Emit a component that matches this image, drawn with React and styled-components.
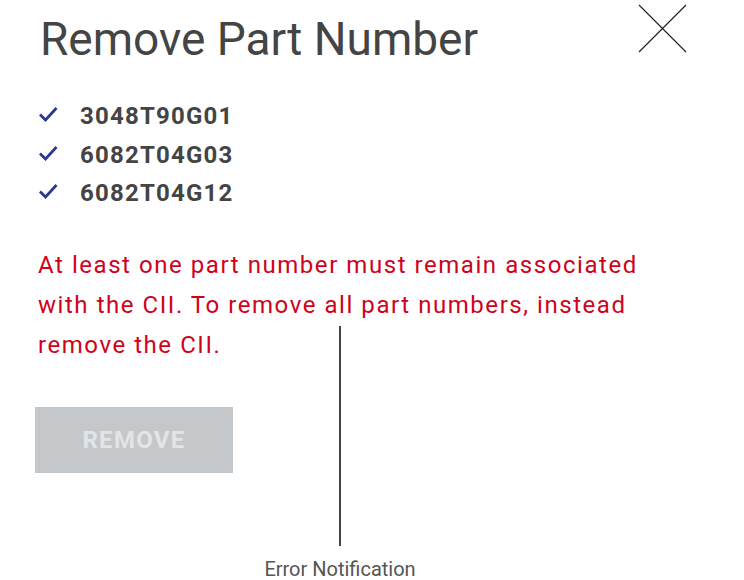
import React from 'react'
import styled, { createGlobalStyle } from 'styled-components';

const GlobalStyle = createGlobalStyle`
    html, body {
        margin: 0;
        padding: 0;
        background: #ffffff;
    }
    body {
        font-family: Roboto, "Liberation Sans", sans-serif;
    }
`;

const parts = ['3048T90G01', '6082T04G03', '6082T04G12'];

const App = () => {
    return (
        <Page>
            <GlobalStyle />
            <Header>
                <Title>Remove Part Number</Title>
                <CloseButton aria-label="Close">
                    <svg width="50" height="50" viewBox="0 0 50 50">
                        <path d="M1 1 L48 48 M48 1 L1 48" stroke="#222" strokeWidth="1.2" fill="none" />
                    </svg>
                </CloseButton>
            </Header>

            <PartList>
                {parts.map((p) => (
                    <PartRow key={p}>
                        <Check viewBox="0 0 20 16">
                            <path d="M2 8.5 L7.5 14 L18.5 2" stroke="#2b3990" strokeWidth="2.8" fill="none" />
                        </Check>
                        <PartNumber>{p}</PartNumber>
                    </PartRow>
                ))}
            </PartList>

            <ErrorText>
                At least one part number must remain associated with the CII. To remove all part numbers, instead remove the CII.
            </ErrorText>

            <RemoveButton disabled>REMOVE</RemoveButton>

            <Callout>
                <CalloutLine />
                <CalloutLabel>Error Notification</CalloutLabel>
            </Callout>
        </Page>
    )
}

const Page = styled.div`
    position: relative;
    width: 744px;
    height: 580px;
    padding: 0 0 0 38px;
    box-sizing: border-box;
    overflow: hidden;
`;

const Header = styled.div`
    display: flex;
    justify-content: space-between;
    align-items: flex-start;
    width: 650px;
    padding-top: 12px;
`;

const Title = styled.h1`
    margin: 0 0 0 2px;
    font-size: 46px;
    line-height: 54px;
    font-weight: 400;
    color: #444444;
`;

const CloseButton = styled.div`
    margin-top: -8px;
    display: flex;
    cursor: pointer;
`;

const PartList = styled.ul`
    list-style: none;
    margin: 31px 0 0 0;
    padding: 0;
    display: flex;
    flex-direction: column;
`;

const PartRow = styled.li`
    display: flex;
    align-items: center;
    height: 38.5px;
`;

const Check = styled.svg`
    width: 20px;
    height: 16px;
    margin-top: -4px;
    margin-right: 22px;
`;

const PartNumber = styled.span`
    font-size: 24px;
    line-height: 28px;
    font-weight: 700;
    letter-spacing: 1.2px;
    color: #444444;
`;

const ErrorText = styled.p`
    margin: 32px 0 0 0;
    width: 650px;
    font-size: 24px;
    line-height: 40px;
    letter-spacing: 1.55px;
    color: #d0021b;
`;

const RemoveButton = styled.button`
    display: flex;
    align-items: center;
    justify-content: center;
    margin: 42px 0 0 -3px;
    width: 198px;
    height: 66px;
    border: none;
    background: #c5c8cb;
    color: #e2e4e6;
    font-family: Roboto, "Liberation Sans", sans-serif;
    font-size: 24px;
    font-weight: 700;
    letter-spacing: 1.3px;
`;

const Callout = styled.div`
    position: absolute;
    left: 240px;
    top: 326px;
    width: 200px;
    display: flex;
    flex-direction: column;
    align-items: center;
`;

const CalloutLine = styled.div`
    width: 2px;
    height: 220px;
    background: #444444;
`;

const CalloutLabel = styled.div`
    margin-top: 11px;
    font-size: 20px;
    color: #555555;
`;

export default App
